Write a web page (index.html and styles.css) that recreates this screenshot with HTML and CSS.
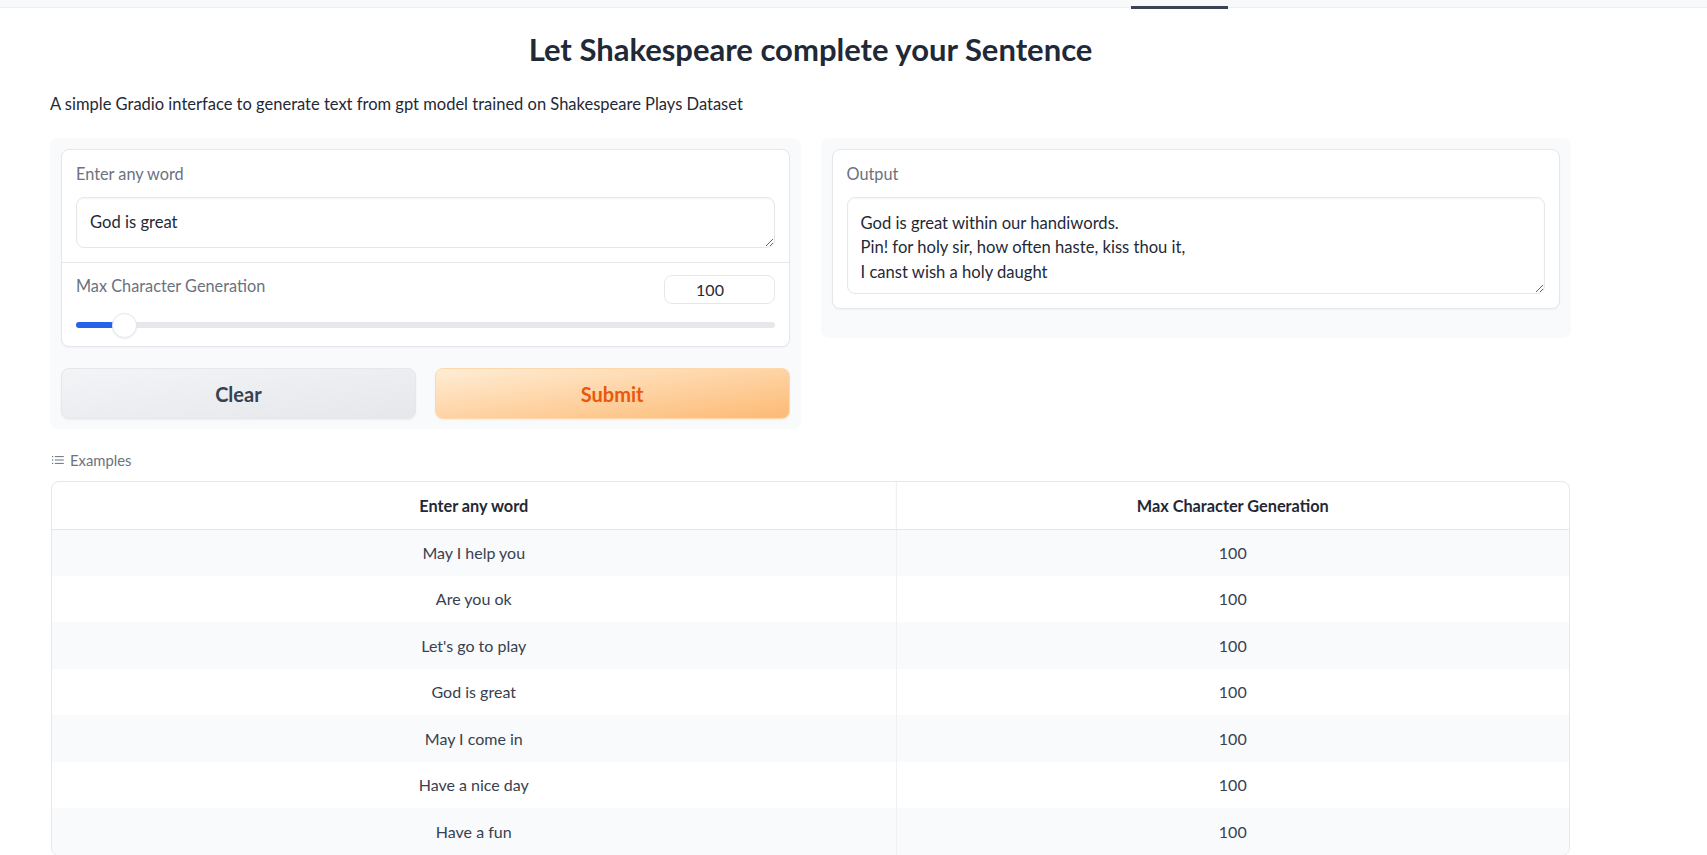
FILE: index.html
```html
<!DOCTYPE html>
<html lang="en">
<head>
<meta charset="utf-8">
<title>Let Shakespeare complete your Sentence</title>
<link rel="stylesheet" href="styles.css">
</head>
<body>
<div class="topbar"><div class="tab"></div></div>
<main class="container">
  <h1 class="title">Let Shakespeare complete your Sentence</h1>
  <p class="desc">A simple Gradio interface to generate text from gpt model trained on Shakespeare Plays Dataset</p>
  <div class="row">
    <div class="panel">
      <div class="block">
        <div class="section">
          <span class="label label-gap">Enter any word</span>
          <textarea class="text one">God is great</textarea>
        </div>
        <div class="section section-slider">
          <div class="slider-head">
            <span class="label">Max Character Generation</span>
            <input class="num" type="number" value="100">
          </div>
          <div class="slider">
            <div class="track"><div class="fill"></div><div class="thumb"></div></div>
          </div>
        </div>
      </div>
      <div class="buttons">
        <button class="btn secondary">Clear</button>
        <button class="btn primary">Submit</button>
      </div>
    </div>
    <div class="panel panel-out">
      <div class="block">
        <div class="section">
          <span class="label label-gap">Output</span>
          <textarea class="text three">God is great within our handiwords.
Pin! for holy sir, how often haste, kiss thou it,
I canst wish a holy daught</textarea>
        </div>
      </div>
    </div>
  </div>
  <div class="examples">
    <div class="ex-label">
      <svg class="ex-icon" width="12" height="10" viewBox="0 0 12 10"><g fill="#6b7280"><rect x="0" y="1" width="1.2" height="1.2"/><rect x="0" y="4.4" width="1.2" height="1.2"/><rect x="0" y="7.8" width="1.2" height="1.2"/><rect x="2.8" y="1.1" width="9" height="1"/><rect x="2.8" y="4.5" width="9" height="1"/><rect x="2.8" y="7.9" width="9" height="1"/></g></svg>
      Examples
    </div>
    <div class="table-wrap">
      <table class="ex-table">
        <colgroup><col class="c1"><col class="c2"></colgroup>
        <thead><tr><th>Enter any word</th><th>Max Character Generation</th></tr></thead>
        <tbody>
          <tr><td>May I help you</td><td>100</td></tr>
          <tr><td>Are you ok</td><td>100</td></tr>
          <tr><td>Let's go to play</td><td>100</td></tr>
          <tr><td>God is great</td><td>100</td></tr>
          <tr><td>May I come in</td><td>100</td></tr>
          <tr><td>Have a nice day</td><td>100</td></tr>
          <tr><td>Have a fun</td><td>100</td></tr>
        </tbody>
      </table>
    </div>
  </div>
</main>
</body>
</html>
```
FILE: styles.css
```css
* { box-sizing: border-box; }
html, body { margin: 0; padding: 0; }
body {
  font-family: Lato, "Source Sans Pro", "Noto Sans", sans-serif;
  color: #1f2937;
  background: #ffffff;
}
.topbar {
  height: 8px;
  background: #f8f9fa;
  border-bottom: 1px solid #eceef1;
  display: flex;
  align-items: flex-end;
  padding-left: 1131px;
}
.topbar .tab {
  width: 97px;
  height: 3px;
  margin-bottom: -2px;
  background: #3a4253;
}
.container {
  width: 1521px;
  margin-left: 50px;
}
.title {
  margin: 22px 0 0;
  text-align: center;
  font-size: 31px;
  line-height: 38px;
  font-weight: 700;
  color: #1f2937;
}
.desc {
  margin: 24px 0 0;
  font-size: 16.5px;
  line-height: 24px;
  color: #1f2937;
}
.row {
  margin-top: 22px;
  display: flex;
  gap: 20px;
  align-items: flex-start;
}
.panel {
  flex: 1;
  background: #f9fafb;
  border-radius: 8px;
  padding: 11px 11px 10px;
  display: flex;
  flex-direction: column;
  gap: 21px;
}
.panel-out { padding-bottom: 29px; }
.block {
  background: #ffffff;
  border: 1px solid #e5e7eb;
  border-radius: 8px;
  box-shadow: 0 1px 2px rgba(0, 0, 0, 0.04);
}
.section { padding: 14px 14px 14px; }
.section-slider {
  border-top: 1px solid #e5e7eb;
  padding: 12px 14px 8px;
}
.label {
  display: block;
  font-size: 16.3px;
  line-height: 20px;
  color: #6b7280;
}
.label-gap { margin-bottom: 13px; }
.text {
  display: block;
  width: 100%;
  font-family: inherit;
  font-size: 16.6px;
  line-height: 24px;
  color: #1f2937;
  padding: 12px 13px;
  border: 1px solid #e5e7eb;
  border-radius: 8px;
  box-shadow: inset 0 1px 2px rgba(0, 0, 0, 0.04);
  resize: vertical;
  outline: none;
  background: #fff;
}
.text.one { height: 51px; }
.text.three { height: 97px; line-height: 24.5px; padding-top: 12.5px; }
.slider-head {
  display: flex;
  justify-content: space-between;
  align-items: flex-start;
}
.slider-head .label { margin-top: 1px; }
.num {
  width: 111px;
  height: 29px;
  border: 1px solid #e5e7eb;
  border-radius: 8px;
  font-family: inherit;
  font-size: 16px;
  color: #1f2937;
  text-align: center;
  padding: 0 18px 0 0;
  outline: none;
  -moz-appearance: textfield;
}
.num::-webkit-inner-spin-button,
.num::-webkit-outer-spin-button { -webkit-appearance: none; margin: 0; }
.slider {
  margin-top: 8px;
  height: 26px;
  display: flex;
  align-items: center;
}
.track {
  flex: 1;
  height: 6px;
  border-radius: 3px;
  background: #e5e7eb;
  position: relative;
}
.fill {
  width: 38px;
  height: 100%;
  border-radius: 3px;
  background: #2563eb;
}
.thumb {
  position: absolute;
  left: 36px;
  top: 50%;
  width: 25px;
  height: 25px;
  margin-top: -12.5px;
  border-radius: 50%;
  background: #ffffff;
  border: 1px solid #e5e7eb;
  box-shadow: 0 1px 2px rgba(0, 0, 0, 0.08);
}
.buttons {
  display: grid;
  grid-template-columns: 1fr 1fr;
  gap: 19px;
}
.btn {
  height: 51px;
  border-radius: 8px;
  font-family: inherit;
  font-size: 20px;
  font-weight: 700;
  border: 1px solid;
  box-shadow: 0 1px 2px rgba(0, 0, 0, 0.05);
}
.btn.secondary {
  background: linear-gradient(to bottom right, #f3f4f6, #e5e7eb);
  border-color: #e5e7eb;
  color: #374151;
}
.btn.primary {
  background: linear-gradient(to bottom right, #ffedd5, #fdba74);
  border-color: #fed7aa;
  color: #ea580c;
}
.examples { margin-top: 21px; }
.ex-label {
  display: flex;
  align-items: center;
  gap: 6px;
  padding-left: 2px;
  font-size: 14.8px;
  line-height: 20px;
  color: #6b7280;
}
.table-wrap {
  margin: 11px 1px 0;
  border: 1px solid #e5e7eb;
  border-radius: 8px;
  overflow: hidden;
}
.ex-table {
  width: 100%;
  border-collapse: collapse;
  table-layout: fixed;
}
.ex-table col.c1 { width: 844px; }
.ex-table th {
  height: 47px;
  font-size: 16.3px;
  font-weight: 700;
  color: #1f2937;
  text-align: center;
  border-bottom: 1px solid #e5e7eb;
  box-shadow: 0 1px 2px rgba(0, 0, 0, 0.04);
}
.ex-table td {
  height: 46.5px;
  font-size: 16px;
  color: #374151;
  text-align: center;
  padding: 0;
}
.ex-table th:first-child,
.ex-table td:first-child { border-right: 1px solid #eef0f2; }
.ex-table tbody tr:nth-child(odd) td { background: #f9fafb; }
```
